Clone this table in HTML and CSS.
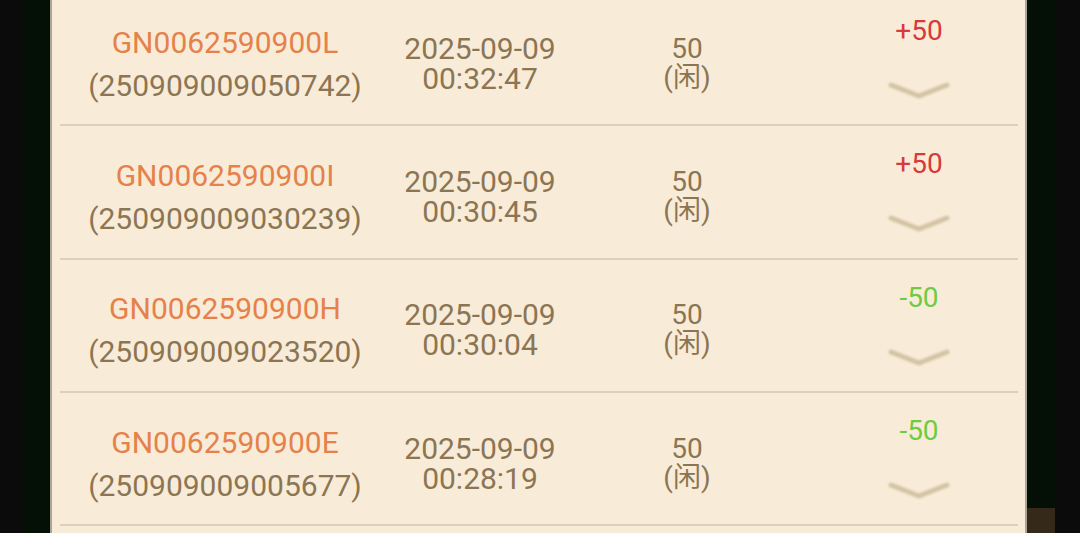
FILE: index.html
```html
<!DOCTYPE html>
<html lang="zh-CN">
<head>
<meta charset="utf-8">
<title>记录</title>
<link rel="stylesheet" href="styles.css">
</head>
<body>
<div class="screen">
  <div class="edge-black"></div>
  <div class="edge-green"></div>
  <div class="panel">
    <div class="list">
      <div class="row">
        <div class="col id"><div class="order">GN0062590900L</div><div class="sub">(250909009050742)</div></div>
        <div class="col time"><div>2025-09-09</div><div>00:32:47</div></div>
        <div class="col bet"><div>50</div><div>(闲)</div></div>
        <div class="col result"><div class="win">+50</div><svg class="chev" viewBox="0 0 64 20" width="64" height="20"><polyline points="4,5 32,16 60,5"/></svg></div>
      </div>
      <div class="row">
        <div class="col id"><div class="order">GN0062590900I</div><div class="sub">(250909009030239)</div></div>
        <div class="col time"><div>2025-09-09</div><div>00:30:45</div></div>
        <div class="col bet"><div>50</div><div>(闲)</div></div>
        <div class="col result"><div class="win">+50</div><svg class="chev" viewBox="0 0 64 20" width="64" height="20"><polyline points="4,5 32,16 60,5"/></svg></div>
      </div>
      <div class="row">
        <div class="col id"><div class="order">GN0062590900H</div><div class="sub">(250909009023520)</div></div>
        <div class="col time"><div>2025-09-09</div><div>00:30:04</div></div>
        <div class="col bet"><div>50</div><div>(闲)</div></div>
        <div class="col result"><div class="lose">-50</div><svg class="chev" viewBox="0 0 64 20" width="64" height="20"><polyline points="4,5 32,16 60,5"/></svg></div>
      </div>
      <div class="row">
        <div class="col id"><div class="order">GN0062590900E</div><div class="sub">(250909009005677)</div></div>
        <div class="col time"><div>2025-09-09</div><div>00:28:19</div></div>
        <div class="col bet"><div>50</div><div>(闲)</div></div>
        <div class="col result"><div class="lose">-50</div><svg class="chev" viewBox="0 0 64 20" width="64" height="20"><polyline points="4,5 32,16 60,5"/></svg></div>
      </div>
    </div>
  </div>
  <div class="edge-green right"><div class="fill"></div><div class="brown"></div></div>
  <div class="edge-black"></div>
</div>
</body>
</html>
```
FILE: styles.css
```css
* { box-sizing: border-box; }
html, body { margin: 0; padding: 0; }
body {
  background: #0b0b0b;
  font-family: Roboto, "Noto Sans CJK SC", sans-serif;
  overflow: hidden;
}
.screen {
  display: flex;
  width: 1080px;
  height: 533px;
  overflow: hidden;
}
.edge-black {
  width: 24px;
  flex: none;
  background: #0b0b0b;
}
.edge-black:last-child { width: 25px; }
.edge-green {
  width: 26px;
  flex: none;
  background: #041006;
}
.edge-green.right {
  width: 28px;
  display: flex;
  flex-direction: column;
}
.edge-green .fill { flex: 1; }
.edge-green .brown { height: 25px; background: #35291a; }
.panel {
  width: 977px;
  flex: none;
  background: #f8ecd8;
  border-left: 2px solid #a9a598;
  border-right: 2px solid #a9a598;
  padding: 0 7px 0 8px;
  overflow: hidden;
}
.list {
  margin-top: -7px;
}
.row {
  display: grid;
  grid-template-columns: 330px 180px 234px 1fr;
  height: 133.3px;
  border-bottom: 2px solid #ddd0b6;
  align-items: center;
  padding-top: 10px;
}
.col {
  text-align: center;
  color: #8c7553;
}
.id { font-size: 30px; line-height: 43px; }
.order { color: #e5814a; }
.time { font-size: 30px; line-height: 30px; }
.bet { font-size: 28px; line-height: 29px; margin-top: -2px; }
.result {
  align-self: start;
  padding-left: 16px;
  margin-top: -10px;
  padding-top: 21px;
  display: flex;
  flex-direction: column;
  align-items: center;
  font-size: 28px;
  line-height: 34px;
}
.win { color: #d8393a; }
.lose { color: #6fcb41; }
.chev {
  display: block;
  margin-top: 32px;
  fill: none;
  stroke: #d3c3a5;
  stroke-width: 5;
  stroke-linecap: round;
  stroke-linejoin: round;
  filter: blur(0.8px);
}
```
